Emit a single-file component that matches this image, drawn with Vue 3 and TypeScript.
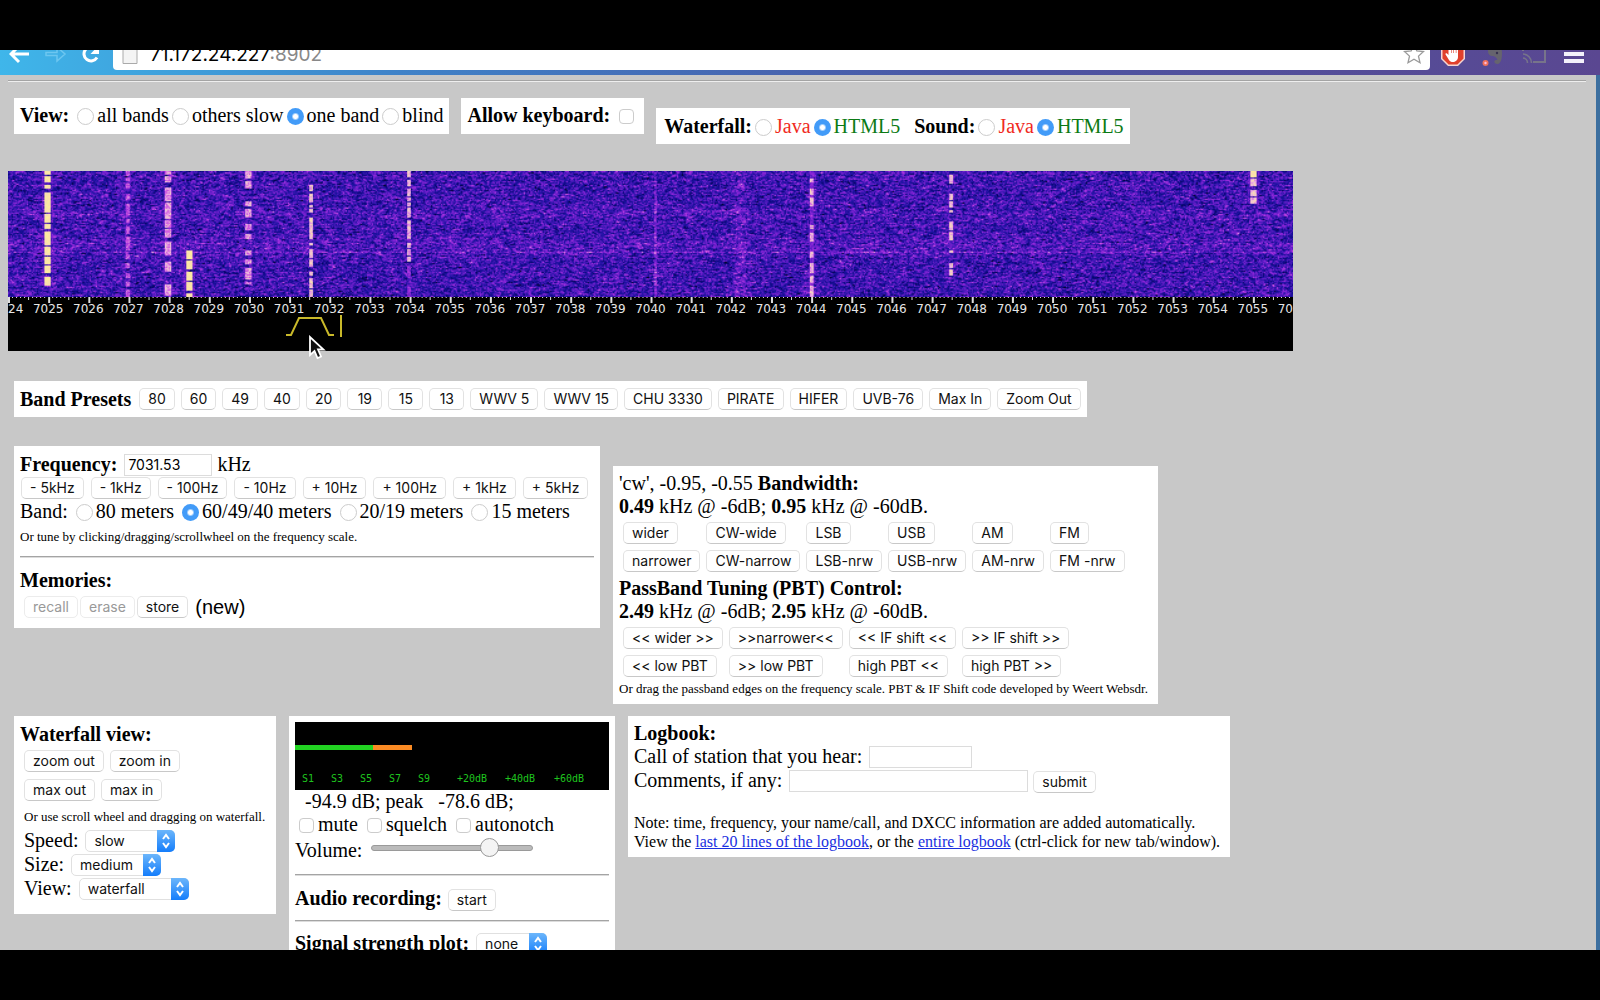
<script setup lang="ts">
import { onMounted, ref } from 'vue'

interface Signal {
  x: number
  w: number
  level: number
  runs: [number, number][]
}

const presets = ['80', '60', '49', '40', '20', '19', '15', '13', 'WWV 5', 'WWV 15', 'CHU 3330', 'PIRATE', 'HIFER', 'UVB-76', 'Max In', 'Zoom Out']
const steps = ['- 5kHz', '- 1kHz', '- 100Hz', '- 10Hz', '+ 10Hz', '+ 100Hz', '+ 1kHz', '+ 5kHz']
const modes = ['wider', 'CW-wide', 'LSB', 'USB', 'AM', 'FM', 'narrower', 'CW-narrow', 'LSB-nrw', 'USB-nrw', 'AM-nrw', 'FM -nrw']
const passband = ['<< wider >>', '>>narrower<<', '<< IF shift <<', '>> IF shift >>', '<< low PBT', '>> low PBT', 'high PBT <<', 'high PBT >>']
const views = ['all bands', 'others slow', 'one band', 'blind']
const bands = ['80 meters', '60/49/40 meters', '20/19 meters', '15 meters']

const view = ref('one band')
const band = ref('60/49/40 meters')
const waterfallKind = ref('HTML5')
const soundKind = ref('HTML5')
const frequency = ref('7031.53')
const volume = ref(76)
const speed = ref('slow')
const size = ref('medium')
const display = ref('waterfall')
const plot = ref('none')

const KHZ = 1285 / 32
const labels = Array.from({ length: 33 }, (_, i) => ({ x: i * KHZ, text: String(7024 + i) }))
const ticks = Array.from({ length: 321 }, (_, i) => ({
  x: (i * KHZ) / 10,
  h: i % 10 === 0 ? 6 : i % 5 === 0 ? 3 : 1,
}))
const meterMarks = [
  { x: 7, text: 'S1' }, { x: 36, text: 'S3' }, { x: 65, text: 'S5' }, { x: 94, text: 'S7' },
  { x: 123, text: 'S9' }, { x: 162, text: '+20dB' }, { x: 210, text: '+40dB' }, { x: 259, text: '+60dB' },
]

const signals: Signal[] = [
  { x: 31, w: 5, level: 1, runs: [[0, 2], [4, 8], [11, 13], [17, 32], [34, 40], [42, 45], [48, 58], [60, 66], [68, 73], [75, 80], [84, 90]] },
  { x: 95, w: 3, level: 0.78, runs: [[0, 3], [5, 7], [10, 13], [18, 22], [26, 34], [38, 40], [44, 49], [52, 62], [66, 69], [73, 76], [81, 84], [88, 91], [94, 99]] },
  { x: 127, w: 4, level: 0.88, runs: [[0, 2], [4, 8], [13, 23], [25, 37], [39, 44], [46, 52], [56, 66], [72, 79], [90, 98]] },
  { x: 144, w: 5, level: 1, runs: [[63, 69], [71, 77], [80, 86], [88, 94], [97, 99]] },
  { x: 191, w: 4, level: 0.88, runs: [[0, 5], [8, 13], [24, 27], [30, 36], [42, 46], [50, 53], [63, 66], [70, 73], [77, 85], [88, 89]] },
  { x: 241, w: 2, level: 0.95, runs: [[11, 15], [18, 24], [27, 28], [30, 32], [37, 53], [57, 58], [62, 68], [70, 75], [80, 82], [85, 92], [94, 99]] },
  { x: 319, w: 2, level: 0.92, runs: [[0, 4], [7, 11], [14, 19], [21, 23], [25, 27], [29, 36], [39, 41], [42, 47], [48, 53], [57, 60], [62, 66], [68, 71]] },
  { x: 319, w: 2, level: 0.65, runs: [[75, 84], [92, 99]] },
  { x: 640, w: 3, level: 0.92, runs: [[6, 8], [14, 18], [21, 27], [43, 45], [49, 55], [64, 68], [73, 80], [83, 88], [91, 99]] },
  { x: 640, w: 2, level: 0.6, runs: [[0, 99]] },
  { x: 751, w: 3, level: 0.95, runs: [[3, 9], [18, 22], [24, 28], [31, 32], [40, 46], [48, 54], [63, 64], [73, 76], [78, 82]] },
  { x: 992, w: 5, level: 1, runs: [[0, 4]] },
  { x: 992, w: 5, level: 0.95, runs: [[6, 11], [15, 19], [21, 25]] },
]

const palette: [number, number, number, number][] = [
  [0, 4, 4, 40], [0.12, 8, 6, 115], [0.28, 30, 18, 162], [0.42, 88, 27, 194],
  [0.56, 142, 38, 218], [0.7, 205, 80, 225], [0.82, 238, 185, 225], [1, 255, 242, 150],
]

function colour(v: number): number[] {
  const c = Math.min(1, Math.max(0, v))
  for (let i = 1; i < palette.length; i++) {
    const a = palette[i - 1]
    const b = palette[i]
    if (c <= b[0]) {
      const t = (c - a[0]) / (b[0] - a[0])
      return [1, 2, 3].map((k) => a[k] + (b[k] - a[k]) * t)
    }
  }
  return [255, 242, 150]
}

const waterfall = ref<HTMLCanvasElement | null>(null)

onMounted(() => {
  const ctx = waterfall.value?.getContext('2d')
  if (!ctx) return
  const W = 1024
  const H = 100
  let seed = 7031
  const rnd = () => {
    seed = (seed * 1664525 + 1013904223) >>> 0
    return seed / 4294967296
  }
  const img = ctx.createImageData(W, H)
  for (let y = 0; y < H; y++) {
    let lift = 0.04 * Math.exp(-(((y - 34) / 4) ** 2)) + 0.05 * Math.exp(-(((y - 58) / 7) ** 2))
    if (y === 64) lift += 0.12
    let noise = 0
    for (let x = 0; x < W; x++) {
      const n = (rnd() + rnd() + rnd()) / 3
      noise = noise * 0.4 + (n - 0.5) * 0.66
      let v = 0.35 + noise + lift
      if (x >= 515 && x <= 516 && y > 4) v += 0.17
      v += 0.09 * Math.exp(-(((x - 583) / 5) ** 2))
      for (const s of signals) {
        const d = Math.abs(x - s.x)
        if (d > s.w + 6) continue
        if (!s.runs.some((r) => y >= r[0] && y <= r[1])) continue
        if (d <= s.w / 2) v = Math.max(v, s.level - rnd() * (s.level < 1 ? 0.2 : 0.08))
        else if (d < s.w && s.level > 0.7) v = Math.max(v, 0.3 + rnd() * 0.25)
        else if (s.level === 1 && s.x < 40 && y % 5 === 1) v = Math.max(v, 0.4 + rnd() * 0.2)
      }
      const c = colour(v)
      const p = (y * W + x) * 4
      img.data[p] = c[0]
      img.data[p + 1] = c[1]
      img.data[p + 2] = c[2]
      img.data[p + 3] = 255
    }
  }
  ctx.putImageData(img, 0, 0)
})
</script>

<template>
  <div class="screen">
    <header class="chrome">
      <div class="toolbar">
        <nav class="nav">
          <button class="tool" type="button" aria-label="Back">
            <svg width="22" height="20" viewBox="0 0 22 20"><path d="M20 10H3M10 2L2 10l8 8" fill="none" stroke="#fff" stroke-width="3" /></svg>
          </button>
          <button class="tool" type="button" aria-label="Forward">
            <svg width="22" height="20" viewBox="0 0 22 20"><path d="M1 8.500h11V3l8 7-8 7v-5.500H1z" fill="none" stroke="#6cc6f0" stroke-width="1.500" /></svg>
          </button>
          <button class="tool" type="button" aria-label="Reload">
            <svg width="20" height="20" viewBox="0 0 20 20"><path d="M16 13.500A7 7 0 1 1 15 5" fill="none" stroke="#fff" stroke-width="3" /><path d="M18 1v9H9.500z" fill="#fff" /></svg>
          </button>
        </nav>
        <div class="address">
          <svg width="16" height="22" viewBox="0 0 16 22"><path d="M1 1h9l5 5v14.500H1z" fill="#f4f4f4" stroke="#aaa" /></svg>
          <span class="url">71.172.24.227<span class="port">:8902</span></span>
          <svg class="star" width="22" height="22" viewBox="0 0 22 22"><path d="M11 1.500l2.800 6.300 6.700.7-5 4.600 1.500 6.700-6-3.500-6 3.500 1.500-6.700-5-4.600 6.700-.7z" fill="#fff" stroke="#999" stroke-width="1.300" /></svg>
        </div>
        <div class="extensions">
          <svg width="24" height="24" viewBox="0 0 24 24"><path d="M7 0h10l7 7v10l-7 7H7l-7-7V7z" fill="#f5d5d2" /><path d="M7.600 1.500h8.800l6.100 6.100v8.800l-6.100 6.100H7.600l-6.100-6.100V7.600z" fill="#e0402c" /><path d="M7.500 6v7l-1.500-1.500c-1-.8-2 0-1.400 1L8 18c1 1.500 2 2 4 2s5-1.500 5-5V7c0-1-1.600-1-1.600 0v4h-.6V5c0-1.200-1.800-1.200-1.800 0v6h-.6V4.500c0-1.200-1.800-1.200-1.800 0V11H10V6c0-1.200-2.500-1.200-2.500 0z" fill="#fff" /></svg>
          <svg width="22" height="24" viewBox="0 0 22 24"><path d="M6 9c0-5 3-7 8-6 4 .5 6 3 6 8s-1 11-4.500 11c-2.500 0-3.500-1.500-3-3s3-1 3-1c-.5-2-3-4-5-4s-4.500-1-4.500-5z" fill="#66646e" /><circle cx="15" cy="11" r="1.200" fill="#37314f" /><circle cx="3.500" cy="21" r="3" fill="#f0715a" /><circle cx="3.500" cy="21" r="1.200" fill="#fbd" /></svg>
          <svg width="26" height="22" viewBox="0 0 26 22"><path d="M2 8V2h22v17h-12" fill="none" stroke="#77748a" stroke-width="2" /><path d="M2 19v.1M2 15a5 5 0 0 1 4.500 5M2 11a9 9 0 0 1 8.500 9" fill="none" stroke="#77748a" stroke-width="1.600" /></svg>
          <svg width="20" height="20" viewBox="0 0 20 20"><path d="M0 3h20M0 10h20M0 17h20" stroke="#f3f1fa" stroke-width="4" /></svg>
        </div>
      </div>
    </header>

    <main class="page">
      <hr class="top-rule" />

      <div class="row options">
        <fieldset class="panel line">
          <b>View:</b>&nbsp;<label v-for="v in views" :key="v"><input v-model="view" type="radio" name="view" :value="v" />{{ v }}</label>
        </fieldset>
        <div class="panel line">
          <label><b>Allow keyboard:</b> <input type="checkbox" class="keyboard" /></label>
        </div>
        <fieldset class="panel line lowered">
          <b>Waterfall:</b><label class="java"><input v-model="waterfallKind" type="radio" name="wf" value="Java" />Java</label><label class="html5"><input v-model="waterfallKind" type="radio" name="wf" value="HTML5" />HTML5</label>
          <b class="sound">Sound:</b><label class="java"><input v-model="soundKind" type="radio" name="snd" value="Java" />Java</label><label class="html5"><input v-model="soundKind" type="radio" name="snd" value="HTML5" />HTML5</label>
        </fieldset>
      </div>

      <section class="spectrum">
        <canvas ref="waterfall" class="waterfall" width="1024" height="100"></canvas>
        <svg class="scale" viewBox="0 0 1285 54" aria-label="Frequency scale">
          <rect v-for="t in ticks" :key="t.x" :x="t.x" y="0" :width="t.h > 3 ? 2 : 1" :height="t.h" fill="#ddd" />
          <text v-for="l in labels" :key="l.text" :x="l.x" y="16" text-anchor="middle">{{ l.text }}</text>
          <path d="M278 38h5l8-17h22l8 17h5M333 18v22" fill="none" stroke="#c9b92a" stroke-width="2" />
        </svg>
        <svg class="pointer" width="18" height="26" viewBox="0 0 18 26"><path d="M2 2v18l4.500-4 3 7 3.500-1.500-3-7h5.500z" fill="#111" stroke="#fff" stroke-width="1.800" /></svg>
      </section>

      <section class="panel presets">
        <b>Band Presets</b>
        <button v-for="p in presets" :key="p" type="button" class="btn">{{ p }}</button>
      </section>

      <div class="row tuning">
        <section class="panel frequency">
          <div class="line"><label for="freq"><b>Frequency:</b></label> <input id="freq" v-model="frequency" type="text" class="field short" /> kHz</div>
          <div class="steps"><button v-for="s in steps" :key="s" type="button" class="btn">{{ s }}</button></div>
          <div class="line">Band: <template v-for="b in bands" :key="b"><label><input v-model="band" type="radio" name="band" :value="b" />{{ b }}</label>{{ ' ' }}</template></div>
          <p class="hint">Or tune by clicking/dragging/scrollwheel on the frequency scale.</p>
          <hr />
          <div class="line"><b>Memories:</b></div>
          <div class="memory">
            <button type="button" class="btn" disabled>recall</button>
            <button type="button" class="btn" disabled>erase</button>
            <button type="button" class="btn">store</button>
            <span class="new">(new)</span>
          </div>
        </section>

        <section class="panel bandwidth">
          <div class="reading">'cw', -0.95, -0.55 <b>Bandwidth:</b></div>
          <div class="reading"><b>0.49</b> kHz @ -6dB; <b>0.95</b> kHz @ -60dB.</div>
          <div class="grid six"><button v-for="m in modes" :key="m" type="button" class="btn">{{ m }}</button></div>
          <div class="reading"><b>PassBand Tuning (PBT) Control:</b></div>
          <div class="reading"><b>2.49</b> kHz @ -6dB; <b>2.95</b> kHz @ -60dB.</div>
          <div class="grid four"><button v-for="m in passband" :key="m" type="button" class="btn">{{ m }}</button></div>
          <p class="hint">Or drag the passband edges on the frequency scale. PBT &amp; IF Shift code developed by Weert Websdr.</p>
        </section>
      </div>

      <div class="row lower">
        <section class="panel wfview">
          <div class="line"><b>Waterfall view:</b></div>
          <div class="inset">
            <div class="pair"><button type="button" class="btn">zoom out</button><button type="button" class="btn">zoom in</button></div>
            <div class="pair"><button type="button" class="btn">max out</button><button type="button" class="btn">max in</button></div>
            <p class="hint">Or use scroll wheel and dragging on waterfall.</p>
            <div class="setting">
              <label for="speed">Speed:</label>
              <span class="pick"><select id="speed" v-model="speed" class="mid"><option>slow</option><option>fast</option></select><svg width="18" height="22" viewBox="0 0 18 22"><path d="M6 9l3-4 3 4M6 13l3 4 3-4" /></svg></span>
            </div>
            <div class="setting">
              <label for="size">Size:</label>
              <span class="pick"><select id="size" v-model="size" class="mid"><option>medium</option><option>large</option></select><svg width="18" height="22" viewBox="0 0 18 22"><path d="M6 9l3-4 3 4M6 13l3 4 3-4" /></svg></span>
            </div>
            <div class="setting">
              <label for="display">View:</label>
              <span class="pick"><select id="display" v-model="display" class="wide"><option>waterfall</option><option>spectrum</option></select><svg width="18" height="22" viewBox="0 0 18 22"><path d="M6 9l3-4 3 4M6 13l3 4 3-4" /></svg></span>
            </div>
          </div>
        </section>

        <section class="panel audio">
          <svg class="meter" viewBox="0 0 314 68" aria-label="Signal meter">
            <rect width="314" height="68" fill="#000" />
            <rect y="23" width="78" height="5" fill="#22d322" />
            <rect x="78" y="23" width="39" height="5" fill="#fb8b24" />
            <text v-for="m in meterMarks" :key="m.text" :x="m.x" y="60">{{ m.text }}</text>
          </svg>
          <div class="tight">&nbsp; -94.9 dB; peak &nbsp; -78.6 dB;</div>
          <div class="line checks">
            <label><input type="checkbox" />mute</label>
            <label><input type="checkbox" />squelch</label>
            <label><input type="checkbox" />autonotch</label>
          </div>
          <div class="volume"><label for="volume">Volume:</label><input id="volume" v-model.number="volume" type="range" min="0" max="100" /></div>
          <hr />
          <div class="line"><b>Audio recording:</b> <button type="button" class="btn start">start</button></div>
          <hr />
          <div class="setting">
            <label for="plot"><b>Signal strength plot:</b></label>
            <span class="pick"><select id="plot" v-model="plot" class="slim"><option>none</option><option>fast</option></select><svg width="18" height="22" viewBox="0 0 18 22"><path d="M6 9l3-4 3 4M6 13l3 4 3-4" /></svg></span>
          </div>
        </section>

        <section class="panel logbook">
          <div class="tight"><b>Logbook:</b></div>
          <div class="line"><label for="call">Call of station that you hear:</label> <input id="call" type="text" class="field call" /></div>
          <div class="line"><label for="comment">Comments, if any:</label> <input id="comment" type="text" class="field comment" /> <button type="button" class="btn">submit</button></div>
          <p class="note">Note: time, frequency, your name/call, and DXCC information are added automatically.<br />View the <a href="#last">last 20 lines of the logbook</a>, or the <a href="#all">entire logbook</a> (ctrl-click for new tab/window).</p>
        </section>
      </div>
    </main>
  </div>
</template>

<style>
body {
  background: #000;
}
</style>

<style scoped>
.screen {
  box-sizing: border-box;
  height: 100vh;
  padding: 50px 0;
  display: flex;
  flex-direction: column;
  background: #000;
  overflow: hidden;
  color: #000;
  font: 20px/24px "Liberation Serif", "Times New Roman", serif;
}
.chrome {
  flex: none;
  height: 25px;
  display: flex;
  align-items: flex-end;
  overflow: hidden;
  background: linear-gradient(90deg, #3fb6ea 0, #3f82c8 25%, #4b56a4 60%, #5a4791 100%);
}
.toolbar {
  flex: 1;
  height: 42px;
  display: flex;
  align-items: center;
  padding: 0 16px 0 9px;
}
.nav {
  display: flex;
  gap: 14px;
  width: 104px;
}
.tool {
  padding: 0;
  border: 0;
  background: none;
}
.tool svg {
  display: block;
}
.address {
  flex: 1;
  height: 32px;
  display: flex;
  align-items: center;
  gap: 12px;
  padding: 0 5px 0 9px;
  border-radius: 4px;
  background: #fff;
}
.url {
  padding-top: 2px;
  font: 19px/24px Inter, sans-serif;
}
.port {
  color: #888;
}
.star {
  margin-left: auto;
}
.extensions {
  display: flex;
  align-items: center;
  gap: 17px;
  padding-left: 11px;
}
.page {
  flex: 1;
  min-height: 0;
  overflow: hidden;
  padding: 0 14px;
  background: #c8c8c8;
  border-right: 4px solid #3c6f9f;
}
hr {
  margin: 0;
  border: 0;
  height: 0;
  border-top: 1px solid #a4a4a4;
  border-bottom: 1px solid #dcdcdc;
}
.top-rule {
  margin: 5px -4px 0 -6px;
  border-bottom-color: #eee;
}
.row {
  display: flex;
  align-items: flex-start;
}
.panel {
  flex: none;
  box-sizing: border-box;
  min-width: 0;
  margin: 0;
  border: 0;
  padding: 6px;
  background: #fff;
}
.line {
  height: 24px;
  line-height: 24px;
  white-space: nowrap;
}
.tight {
  line-height: 22px;
  white-space: nowrap;
}
.reading {
  line-height: 23px;
  white-space: nowrap;
}
.options {
  margin-top: 16px;
  gap: 12px;
}
.options .panel {
  height: 36px;
  padding: 5px 6px 7px;
}
.options .lowered {
  margin-top: 10px;
  padding: 6px 6px 6px 8px;
}
.java {
  color: #f02a1d;
}
.html5 {
  color: #0b7a14;
}
.sound {
  margin-left: 14px;
}
input[type="radio"],
input[type="checkbox"] {
  appearance: none;
  box-sizing: border-box;
  margin: 0 3px;
  border: 1px solid #ccc;
  background: #fff;
}
input[type="radio"] {
  width: 17px;
  height: 17px;
  border-radius: 50%;
  vertical-align: -3px;
}
input[type="radio"]:checked {
  border: 0;
  background: radial-gradient(circle, #fff 0, #fff 2px, #429bf8 4px);
}
input[type="checkbox"] {
  width: 15px;
  height: 15px;
  margin: 0 4px;
  border-radius: 4px;
  vertical-align: -2px;
}
.spectrum {
  position: relative;
  width: 1285px;
  margin: 27px 0 0 -6px;
  background: #000;
}
.waterfall {
  display: block;
  width: 100%;
  height: 126px;
}
.scale {
  display: block;
  width: 100%;
}
.scale text {
  fill: #e6e6e6;
  font: 12px "DejaVu Sans", sans-serif;
}
.pointer {
  position: absolute;
  left: 300px;
  top: 164px;
}
.btn {
  box-sizing: border-box;
  height: 22px;
  padding: 0 8px;
  border: 1px solid #e2e2e2;
  border-bottom-color: #c8c8c8;
  border-radius: 5px;
  background: #fff;
  color: #111;
  font: 14px/18px Inter, sans-serif;
  white-space: nowrap;
}
.btn:disabled {
  color: #999;
  border-color: #ececec;
}
.presets {
  display: flex;
  align-items: center;
  gap: 6px;
  width: max-content;
  height: 36px;
  margin-top: 30px;
}
.presets b {
  margin-right: 2px;
}
.presets .btn {
  min-width: 35px;
}
.tuning {
  margin-top: 29px;
  gap: 13px;
}
.frequency {
  width: 586px;
  height: 182px;
}
.field {
  box-sizing: border-box;
  height: 22px;
  margin: 0 0 0 2px;
  padding: 0 3px;
  border: 1px solid #dcdcdc;
  background: #fff;
  font: 14px/18px Inter, sans-serif;
  vertical-align: 1px;
}
.short {
  width: 88px;
}
.steps {
  display: flex;
  gap: 7px;
  padding: 1px 0 0 1px;
}
.hint {
  margin: 0;
  font-size: 13px;
  line-height: 18px;
  white-space: nowrap;
}
.frequency .hint {
  margin-top: 5px;
}
.frequency hr {
  margin: 10px 0;
}
.memory {
  display: flex;
  align-items: center;
  gap: 2px;
  padding: 3px 4px 0;
}
.new {
  padding-left: 5px;
  font: 20px/24px "Liberation Sans", Arial, sans-serif;
}
.bandwidth {
  width: 545px;
  margin-top: 20px;
}
.grid {
  display: grid;
  justify-content: start;
  justify-items: start;
  gap: 6px;
  padding: 4px 4px 5px;
}
.six {
  grid-template-columns: repeat(6, auto);
}
.four {
  grid-template-columns: repeat(4, auto);
  padding-bottom: 3px;
}
.lower {
  margin-top: 12px;
  gap: 13px;
}
.wfview {
  width: 262px;
  height: 198px;
}
.inset {
  padding: 4px 4px 0;
}
.pair {
  display: flex;
  gap: 6px;
  margin-bottom: 7px;
}
.wfview .hint {
  margin-bottom: 3px;
}
.setting {
  display: flex;
  gap: 7px;
  height: 24px;
  line-height: 22px;
  white-space: nowrap;
}
.pick {
  position: relative;
  height: 22px;
  margin-top: 1px;
}
.pick select {
  appearance: none;
  box-sizing: border-box;
  height: 22px;
  padding: 0 8px;
  border: 1px solid #e0e0e0;
  border-radius: 5px;
  background: #fff;
  color: #111;
  font: 14px/18px Inter, sans-serif;
  vertical-align: top;
}
.pick svg {
  position: absolute;
  top: 0;
  right: 0;
  border-radius: 0 5px 5px 0;
  background: linear-gradient(#6cb6fb, #147dfb);
  fill: none;
  stroke: #fff;
  stroke-width: 2;
  pointer-events: none;
}
.mid {
  width: 90px;
}
.wide {
  width: 110px;
}
.slim {
  width: 71px;
}
.audio {
  width: 326px;
}
.meter {
  display: block;
  width: 100%;
}
.meter text {
  fill: #1fc41f;
  font: 10px "DejaVu Sans Mono", monospace;
}
.checks {
  display: flex;
  gap: 5px;
}
.volume {
  display: flex;
  align-items: center;
  gap: 9px;
  height: 28px;
}
.volume input {
  appearance: none;
  width: 162px;
  height: 20px;
  margin: 0 0 4px;
  background: none;
}
.volume input::-webkit-slider-runnable-track {
  height: 6px;
  border: 1px solid #9a9a9a;
  box-sizing: border-box;
  border-radius: 3px;
  background: #bbb;
}
.volume input::-webkit-slider-thumb {
  appearance: none;
  box-sizing: border-box;
  width: 19px;
  height: 19px;
  margin-top: -8px;
  border: 1px solid #999;
  border-radius: 50%;
  background: #f4f4f4;
}
.audio hr {
  margin: 10px 0;
}
.start {
  margin-left: 1px;
}
.logbook {
  width: 602px;
}
.note {
  margin: 21px 0 0;
  font-size: 16px;
  line-height: 19px;
  white-space: nowrap;
}
.call {
  width: 103px;
}
.comment {
  width: 239px;
}
a {
  color: #1a2fe0;
}
</style>
